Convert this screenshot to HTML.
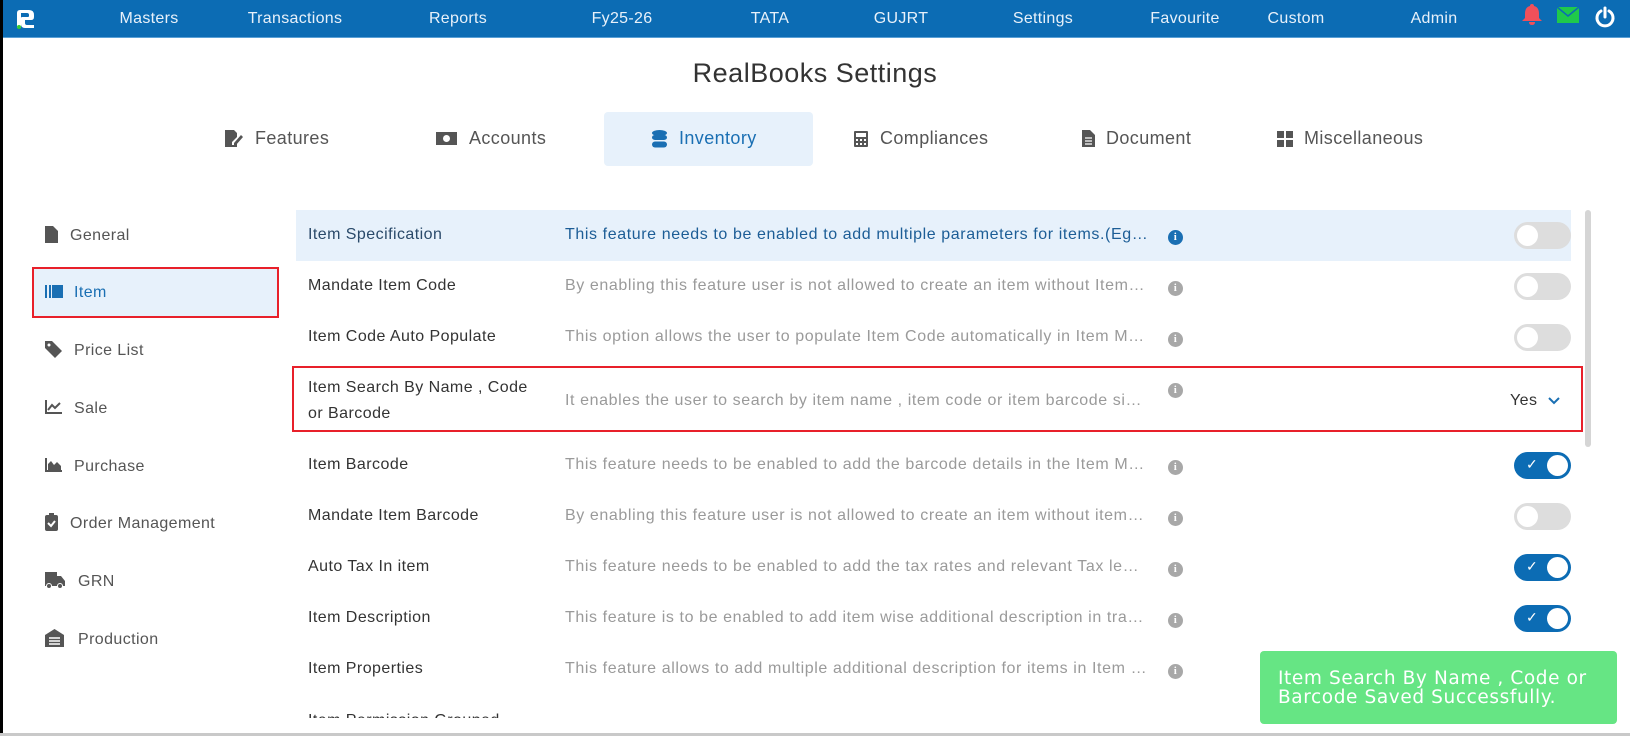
<!DOCTYPE html>
<html><head><meta charset="utf-8"><style>
*{margin:0;padding:0;box-sizing:border-box}
body{width:1630px;height:736px;overflow:hidden;background:#fff;font-family:"Liberation Sans",sans-serif;position:relative}
.lb{position:absolute;left:0;top:0;width:3px;height:736px;background:#000;z-index:5}
.bb{position:absolute;left:0;top:733px;width:1630px;height:3px;background:#c9c9c9;z-index:5}
.nav{position:absolute;left:0;top:0;width:1630px;height:38px;background:#0c6cb4;border-bottom:1px solid #5aa0d6}
.nav span{position:absolute;top:10px;color:#e8f1fa;font-size:16px;transform:translateX(-50%);letter-spacing:.3px;white-space:nowrap}
.a{position:absolute;white-space:nowrap}
h1{position:absolute;left:0;width:1630px;text-align:center;top:58px;font-size:27px;font-weight:normal;color:#333;letter-spacing:.5px}
.tab{position:absolute;top:128px;font-size:18px;color:#555;letter-spacing:.4px;white-space:nowrap}
.tab.on{color:#1a6fb3}
.tabbg{position:absolute;left:604px;top:112px;width:209px;height:54px;background:#e7f1fb;border-radius:4px}
.sb{position:absolute;left:0;font-size:16px;color:#555;letter-spacing:.4px}
.row{position:absolute;left:296px;width:1275px;font-size:16px;letter-spacing:.45px}
.row .n{position:absolute;left:12px;color:#333;white-space:nowrap}
.row .d{position:absolute;left:269px;width:583px;white-space:nowrap;overflow:hidden;text-overflow:ellipsis;color:#9a9a9a;letter-spacing:.6px}
.row .i{position:absolute;left:872px;width:15px;height:15px;border-radius:50%;background:#a8a8a8;color:#fff;font-size:11px;font-weight:bold;text-align:center;line-height:15px;font-family:"Liberation Serif",serif}
.tg{position:absolute;left:1218px;width:57px;height:27px;border-radius:14px;background:#ddd}
.tg::after{content:"";position:absolute;left:3px;top:3px;width:21px;height:21px;border-radius:50%;background:#fff}
.tg.on{background:#0c6cb4}
.tg.on::after{left:33px}
.tg.on b{position:absolute;left:12px;top:4px;color:#fff;font-size:14px;font-weight:normal}
</style></head><body>
<div class="lb"></div><div class="bb"></div>
<div class="nav">
<svg class="a" style="left:14px;top:8px" width="22" height="22" viewBox="0 0 22 22"><path d="M3 20V5q0-3 3-3h9q5 0 5 5v2q0 3-3 3h-6v3q0 2 2 2h7v3h-9q-4 0-4-4V10q0-1 1-1h6q1 0 1-1V7q0-2-2-2H7v15z" fill="#fff"/><circle cx="5" cy="19" r="2" fill="#3c3"/></svg>
<span style="left:149px">Masters</span><span style="left:295px">Transactions</span><span style="left:458px">Reports</span><span style="left:622px">Fy25-26</span><span style="left:770px">TATA</span><span style="left:901px">GUJRT</span><span style="left:1043px">Settings</span><span style="left:1185px">Favourite</span><span style="left:1296px">Custom</span><span style="left:1434px">Admin</span>
<svg class="a" style="left:1520px;top:3px" width="24" height="22" viewBox="0 0 24 22"><path d="M12 1q2 0 2 2q5 1 5 8v4l3 3H2l3-3v-4q0-7 5-8q0-2 2-2zM9 19h6q0 3-3 3t-3-3z" fill="#f0505a"/></svg>
<svg class="a" style="left:1557px;top:7px" width="22" height="16" viewBox="0 0 22 16"><rect width="22" height="16" fill="#1fc94b"/><path d="M0 0l11 9 11-9" stroke="#0c6cb4" stroke-width="1.5" fill="none"/></svg>
<svg class="a" style="left:1594px;top:6px" width="22" height="22" viewBox="0 0 22 22"><path d="M7 5a8 8 0 1 0 8 0" stroke="#fff" stroke-width="3" fill="none" stroke-linecap="round"/><path d="M11 2v9" stroke="#fff" stroke-width="3" stroke-linecap="round"/></svg>
</div>
<h1>RealBooks Settings</h1>
<div class="tabbg"></div>
<svg class="a" style="left:225px;top:130px" width="18" height="17" viewBox="0 0 18 17"><path d="M0 0h9l3 3v4l-5 5v3h3l2-2v4H0z" fill="#555"/><path d="M9 13l7-8 2 2-7 8H9z" fill="#555"/></svg>
<span class="tab" style="left:255px">Features</span>
<svg class="a" style="left:436px;top:132px" width="21" height="13" viewBox="0 0 21 13"><rect width="21" height="13" fill="#555"/><circle cx="10.5" cy="6.5" r="3.5" fill="#fff"/></svg>
<span class="tab" style="left:469px">Accounts</span>
<svg class="a" style="left:652px;top:130px" width="15" height="18" viewBox="0 0 15 18"><ellipse cx="7.5" cy="3" rx="7.5" ry="3" fill="#1a6fb3"/><rect y="5" width="15" height="5" rx="3" fill="#1a6fb3"/><rect y="11.5" width="15" height="6" rx="3" fill="#1a6fb3"/></svg>
<span class="tab on" style="left:679px">Inventory</span>
<svg class="a" style="left:854px;top:131px" width="14" height="16" viewBox="0 0 14 16"><rect width="14" height="16" rx="1" fill="#555"/><rect x="2" y="2" width="10" height="4" fill="#fff"/><g fill="#fff"><rect x="2" y="8" width="2" height="2"/><rect x="6" y="8" width="2" height="2"/><rect x="10" y="8" width="2" height="2"/><rect x="2" y="12" width="2" height="2"/><rect x="6" y="12" width="2" height="2"/><rect x="10" y="12" width="2" height="2"/></g></svg>
<span class="tab" style="left:880px">Compliances</span>
<svg class="a" style="left:1082px;top:130px" width="13" height="17" viewBox="0 0 13 17"><path d="M0 0h8l5 5v12H0z" fill="#555"/><path d="M3 8h7M3 11h7M3 14h7" stroke="#fff" stroke-width="1.3"/></svg>
<span class="tab" style="left:1106px">Document</span>
<svg class="a" style="left:1277px;top:131px" width="16" height="16" viewBox="0 0 16 16"><g fill="#555"><rect width="7" height="7"/><rect x="9" width="7" height="7"/><rect y="9" width="7" height="7"/><rect x="9" y="9" width="7" height="7"/></g></svg>
<span class="tab" style="left:1304px">Miscellaneous</span>

<div class="a" style="left:32px;top:267px;width:247px;height:51px;background:#e7f1fb;border:2px solid #e8202a"></div>
<div class="sb" style="top:227px"><svg class="a" style="left:45px;top:-1px" width="13" height="17" viewBox="0 0 13 17"><path d="M0 0h8l5 5v12H0z" fill="#555"/></svg><span class="a" style="left:70px;top:0">General</span></div>
<div class="sb" style="top:284px;color:#1a6fb3"><svg class="a" style="left:45px;top:1px" width="18" height="13" viewBox="0 0 18 13"><g fill="#1a6fb3"><rect width="2" height="13"/><rect x="4" width="2" height="13"/><rect x="7" width="11" height="13"/></g></svg><span class="a" style="left:74px;top:0">Item</span></div>
<div class="sb" style="top:342px"><svg class="a" style="left:45px;top:-1px" width="17" height="17" viewBox="0 0 17 17"><path d="M0 0h7l10 10-7 7L0 7z" fill="#555"/><circle cx="4" cy="4" r="1.5" fill="#fff"/></svg><span class="a" style="left:74px;top:0">Price List</span></div>
<div class="sb" style="top:400px"><svg class="a" style="left:45px;top:0" width="17" height="14" viewBox="0 0 17 14"><path d="M1 0v13h16" stroke="#555" stroke-width="2" fill="none"/><path d="M3 10l4-5 3 3 5-5" stroke="#555" stroke-width="2" fill="none"/></svg><span class="a" style="left:74px;top:0">Sale</span></div>
<div class="sb" style="top:458px"><svg class="a" style="left:45px;top:0" width="17" height="14" viewBox="0 0 17 14"><path d="M1 0v13h16" stroke="#555" stroke-width="2" fill="none"/><path d="M3 12V6l3-3 3 4 3-3 4 4v4z" fill="#555"/></svg><span class="a" style="left:74px;top:0">Purchase</span></div>
<div class="sb" style="top:515px"><svg class="a" style="left:45px;top:-2px" width="13" height="18" viewBox="0 0 13 18"><rect y="2" width="13" height="16" rx="2" fill="#555"/><rect x="4" width="5" height="4" fill="#555"/><path d="M3 10l3 3 4-5" stroke="#fff" stroke-width="2" fill="none"/></svg><span class="a" style="left:70px;top:0">Order Management</span></div>
<div class="sb" style="top:573px"><svg class="a" style="left:45px;top:-1px" width="20" height="17" viewBox="0 0 20 17"><path d="M0 0h12v4h4l4 5v5H0z" fill="#555"/><circle cx="4" cy="14" r="2.5" fill="#555" stroke="#fff"/><circle cx="15" cy="14" r="2.5" fill="#555" stroke="#fff"/></svg><span class="a" style="left:78px;top:0">GRN</span></div>
<div class="sb" style="top:631px"><svg class="a" style="left:45px;top:-2px" width="19" height="18" viewBox="0 0 19 18"><path d="M0 6l9.5-6 9.5 6v12H0z" fill="#555"/><path d="M4 9h11M4 12h11M4 15h11" stroke="#fff" stroke-width="1.5"/></svg><span class="a" style="left:78px;top:0">Production</span></div>

<div class="a" style="left:296px;top:210px;width:1275px;height:51px;background:#e7f1fb"></div>
<div class="a" style="left:1585px;top:210px;width:6px;height:237px;background:#d5d5d5;border-radius:3px"></div>

<div class="row" style="top:226px"><span class="n" style="color:#2a4a6a">Item Specification</span><span class="d" style="color:#1c5d96">This feature needs to be enabled to add multiple parameters for items.(Eg. Size, Colour etc)</span><span class="i" style="background:#1a6fb3;top:4px">i</span><div class="tg" style="top:-4px"></div></div>
<div class="row" style="top:277px"><span class="n">Mandate Item Code</span><span class="d">By enabling this feature user is not allowed to create an item without Item Code</span><span class="i" style="top:4px">i</span><div class="tg" style="top:-4px"></div></div>
<div class="row" style="top:328px"><span class="n">Item Code Auto Populate</span><span class="d">This option allows the user to populate Item Code automatically in Item Master</span><span class="i" style="top:4px">i</span><div class="tg" style="top:-4px"></div></div>
<div class="a" style="left:292px;top:366px;width:1291px;height:66px;border:2px solid #e8202a"></div>
<div class="row" style="top:379px"><span class="n" style="line-height:26px;top:-4px">Item Search By Name , Code<br>or Barcode</span><span class="d" style="top:13px">It enables the user to search by item name , item code or item barcode simultaneously</span><span class="i" style="top:4px">i</span><span class="a" style="left:1214px;top:13px;color:#333">Yes</span><svg class="a" style="left:1252px;top:18px" width="12" height="8" viewBox="0 0 12 8"><path d="M1 1l5 5 5-5" stroke="#1a6fb3" stroke-width="2" fill="none"/></svg></div>
<div class="row" style="top:456px"><span class="n">Item Barcode</span><span class="d">This feature needs to be enabled to add the barcode details in the Item Master</span><span class="i" style="top:4px">i</span><div class="tg on" style="top:-4px"><b>✓</b></div></div>
<div class="row" style="top:507px"><span class="n">Mandate Item Barcode</span><span class="d">By enabling this feature user is not allowed to create an item without item barcode</span><span class="i" style="top:4px">i</span><div class="tg" style="top:-4px"></div></div>
<div class="row" style="top:558px"><span class="n">Auto Tax In item</span><span class="d">This feature needs to be enabled to add the tax rates and relevant Tax ledgers in item</span><span class="i" style="top:4px">i</span><div class="tg on" style="top:-4px"><b>✓</b></div></div>
<div class="row" style="top:609px"><span class="n">Item Description</span><span class="d">This feature is to be enabled to add item wise additional description in transactions</span><span class="i" style="top:4px">i</span><div class="tg on" style="top:-4px"><b>✓</b></div></div>
<div class="row" style="top:660px"><span class="n">Item Properties</span><span class="d">This feature allows to add multiple additional description for items in Item Master</span><span class="i" style="top:4px">i</span></div>
<div class="row" style="top:712px;height:6px;overflow:hidden"><span class="n">Item Permission Grouped</span></div>

<div class="a" style="left:1260px;top:651px;width:357px;height:73px;background:#66e584;border-radius:4px;color:#fff;font-family:'DejaVu Sans',sans-serif;font-size:18.5px;line-height:19px;padding:18px 0 0 18px;letter-spacing:.6px">Item Search By Name , Code or<br>Barcode Saved Successfully.</div>
</body></html>
